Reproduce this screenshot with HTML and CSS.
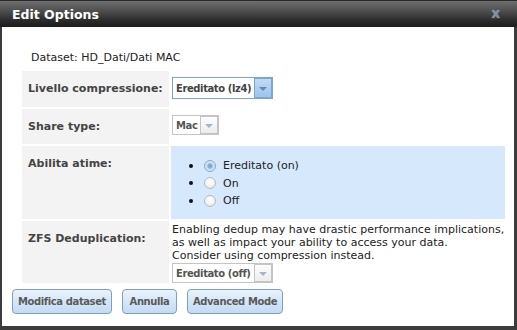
FILE: index.html
```html
<!DOCTYPE html>
<html>
<head>
<meta charset="utf-8">
<link rel="stylesheet" href="styles.css">
</head>
<body>
<div class="dialog">
  <div class="titlebar">
    <span class="title">Edit Options</span>
    <span class="close">X</span>
  </div>
  <div class="content">
    <p class="dataset">Dataset: HD_Dati/Dati MAC</p>
    <table class="form">
      <tr class="r1">
        <th>Livello compressione:</th>
        <td class="mid">
          <span class="select focus"><span class="val">Ereditato (lz4)</span><span class="arrow"></span></span>
        </td>
      </tr>
      <tr class="r2">
        <th>Share type:</th>
        <td class="mid">
          <span class="select"><span class="val">Mac</span><span class="arrow"></span></span>
        </td>
      </tr>
      <tr class="r3">
        <th>Abilita atime:</th>
        <td class="hover">
          <ul class="radios">
            <li><span class="radio checked"></span>Ereditato (on)</li>
            <li><span class="radio"></span>On</li>
            <li><span class="radio"></span>Off</li>
          </ul>
        </td>
      </tr>
      <tr class="r4">
        <th>ZFS Deduplication:</th>
        <td class="dedup">
          <div class="note">Enabling dedup may have drastic performance implications,<br>as well as impact your ability to access your data.<br>Consider using compression instead.</div>
          <span class="select"><span class="val">Ereditato (off)</span><span class="arrow"></span></span>
        </td>
      </tr>
    </table>
    <div class="buttons">
      <button class="btn b1">Modifica dataset</button>
      <button class="btn b2">Annulla</button>
      <button class="btn b3">Advanced Mode</button>
    </div>
  </div>
</div>
</body>
</html>
```
FILE: styles.css
```css
* { box-sizing: border-box; }
html, body { margin: 0; padding: 0; background: #3a3a3a; }
body { width: 517px; height: 330px; overflow: hidden; font-family: "DejaVu Sans", Verdana, sans-serif; }

.dialog {
  width: 517px;
  height: 330px;
  background: #3c3c3c;
  padding: 0 3px 4px 2px;
  display: flex;
  flex-direction: column;
}

.titlebar {
  height: 27px;
  margin: 0 -3px 0 -2px;
  background: linear-gradient(#6e6e6e 0, #4d4d4d 40%, #2b2b2b 75%, #1c1c1c 100%);
  border-top: 1px solid #2a2a2a;
  display: flex;
  align-items: center;
  justify-content: space-between;
  padding: 0 17px 0 12px;
}
.title {
  color: #fff;
  font-weight: bold;
  font-size: 12.5px;
}
.close {
  color: #7d8fa2;
  font-weight: bold;
  font-size: 11px;
  text-shadow: 0 0 1px #b8c6d4;
}

.content {
  flex: 1;
  background: #fff;
  padding: 24px 0 0 0;
}

.dataset {
  margin: 0 0 4px 29px;
  font-size: 11px;
  line-height: 14px;
  color: #222;
}

.form {
  border-collapse: separate;
  border-spacing: 2px;
  margin-left: 18px;
  width: 487px;
}
.form th {
  width: 147px;
  background: #f3f3f3;
  text-align: left;
  vertical-align: top;
  padding: 11px 6px 0 6px;
  font-size: 11px;
  line-height: 14px;
  color: #444;
  font-weight: bold;
}
.form td {
  padding: 0 0 0 1px;
  vertical-align: top;
  font-size: 11px;
  color: #222;
}
.form td.mid { padding-top: 6px; }
.r1 { height: 36px; }
.r2 { height: 35px; }
.r3 { height: 73px; }
.r4 { height: 61px; }
.form td.hover { background: #d6e8fb; }

.select {
  display: inline-flex;
  align-items: stretch;
  height: 20px;
  border: 1px solid #c4c4c4;
  background: #fff;
  vertical-align: top;
}
.select .val {
  font-size: 10px;
  letter-spacing: -0.4px;
  font-weight: bold;
  color: #555;
  padding: 0 3px 0 3px;
  display: flex;
  align-items: center;
}
.select .arrow {
  width: 18px;
  border: 1px solid #c4c4c4;
  background: linear-gradient(#fdfdfd, #ececec);
  position: relative;
}
.select .arrow::after {
  content: "";
  position: absolute;
  left: 4px;
  top: 7px;
  border-left: 4px solid transparent;
  border-right: 4px solid transparent;
  border-top: 4px solid #a3b4c6;
}
.select.focus {
  height: 22px;
  border-color: #79a6d6;
}
.select.focus .val { color: #444; }
.select.focus .arrow {
  border-color: #79a6d6;
  background: linear-gradient(#c2dbf3, #9fc4ea);
}
.select.focus .arrow::after { top: 8px; border-top-color: #5c8cc2; }

.radios {
  margin: 11px 0 0 0;
  padding: 0 0 0 17px;
  list-style: none;
  font-size: 11px;
  line-height: 17.5px;
  color: #222;
}
.radios li {
  display: flex;
  align-items: center;
  height: 17.5px;
}
.radios li::before {
  content: "";
  width: 4px;
  height: 4px;
  border-radius: 50%;
  background: #111;
  margin-right: 11px;
}
.radio {
  display: inline-block;
  width: 12px;
  height: 12px;
  border-radius: 50%;
  border: 1px solid #b7bcc2;
  background: radial-gradient(circle at 50% 35%, #ffffff 0, #eef0f2 60%, #d8dbde 100%);
  margin: 0 7px 0 0;
}
.radio.checked {
  border-color: #88a8c8;
  background: radial-gradient(circle, #6f9fcf 0, #8fb6dd 30%, #c6dcf0 45%, #eef4fa 100%);
}

.dedup { padding-top: 2px !important; }
.note {
  font-size: 11px;
  line-height: 13px;
  color: #222;
  margin-bottom: 1px;
}

.buttons {
  display: flex;
  gap: 10px;
  padding: 4px 0 0 10px;
}
.btn {
  height: 25px;
  border: 1px solid #7f9fbf;
  border-radius: 4px;
  background: linear-gradient(#eaf3fc, #d0e4f6 60%, #c3dbf2);
  font-family: "DejaVu Sans", Verdana, sans-serif;
  font-weight: bold;
  font-size: 10px;
  letter-spacing: -0.4px;
  white-space: nowrap;
  color: #5a5a5a;
  padding: 0;
}
.b1 { width: 100px; }
.b2 { width: 55px; }
.b3 { width: 96px; }
```
